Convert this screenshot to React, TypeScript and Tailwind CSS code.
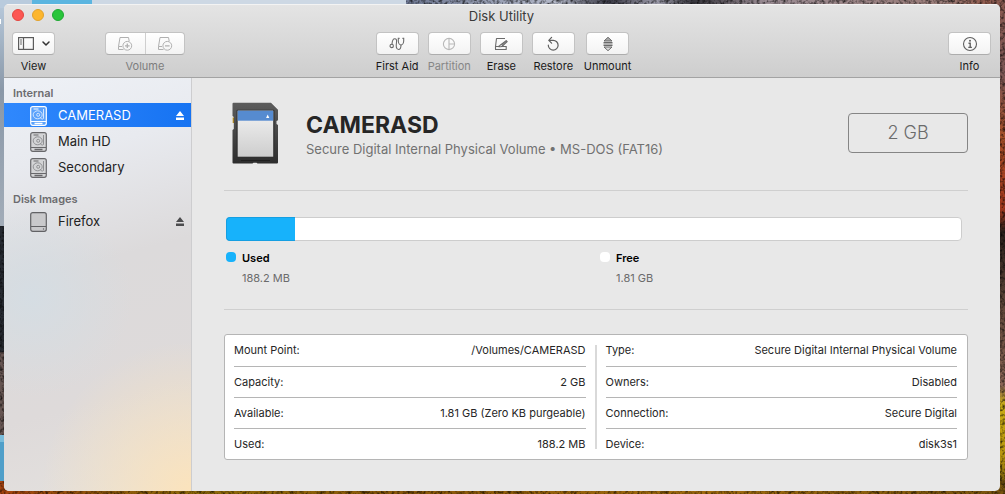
import { useState } from "react";

const FONT = "font-[Inter,'Liberation_Sans',sans-serif]";

const DETAILS_LEFT = [
  ["Mount Point:", "/Volumes/CAMERASD"],
  ["Capacity:", "2 GB"],
  ["Available:", "1.81 GB (Zero KB purgeable)"],
  ["Used:", "188.2 MB"],
];

const DETAILS_RIGHT = [
  ["Type:", "Secure Digital Internal Physical Volume"],
  ["Owners:", "Disabled"],
  ["Connection:", "Secure Digital"],
  ["Device:", "disk3s1"],
];

const USED_PERCENT = 9.4;

function Wallpaper() {
  return (
    <svg className="absolute inset-0 w-full h-full" viewBox="0 0 1005 494" preserveAspectRatio="none" aria-hidden="true">
      <defs>
        <linearGradient id="sky" x1="0" y1="0" x2="0" y2="1">
          <stop offset="0" stopColor="#b9cbdd" />
          <stop offset="0.4" stopColor="#8a98a8" />
          <stop offset="1" stopColor="#a2acb8" />
        </linearGradient>
        <linearGradient id="ridge" x1="0" y1="0" x2="1" y2="0">
          <stop offset="0" stopColor="#6d7792" />
          <stop offset="0.25" stopColor="#b3b8c8" />
          <stop offset="0.34" stopColor="#3a3a46" />
          <stop offset="0.42" stopColor="#9d9cab" />
          <stop offset="0.48" stopColor="#35343b" />
          <stop offset="0.6" stopColor="#9a8c94" />
          <stop offset="0.9" stopColor="#9a7c78" />
          <stop offset="1" stopColor="#8b4b38" />
        </linearGradient>
        <linearGradient id="slope" x1="0" y1="0" x2="0" y2="1">
          <stop offset="0" stopColor="#8a5a50" />
          <stop offset="0.15" stopColor="#7b5654" />
          <stop offset="0.28" stopColor="#a85028" />
          <stop offset="0.42" stopColor="#a2371c" />
          <stop offset="0.47" stopColor="#2b211c" />
          <stop offset="0.62" stopColor="#5e4638" />
          <stop offset="0.78" stopColor="#8a6454" />
          <stop offset="0.82" stopColor="#c9ac14" />
          <stop offset="0.92" stopColor="#b8960e" />
          <stop offset="1" stopColor="#68500c" />
        </linearGradient>
        <linearGradient id="forest" x1="0" y1="0" x2="1" y2="0">
          <stop offset="0" stopColor="#a6430f" />
          <stop offset="0.1" stopColor="#8e550a" />
          <stop offset="0.2" stopColor="#8f6b09" />
          <stop offset="0.4" stopColor="#8a570a" />
          <stop offset="0.7" stopColor="#a06a0d" />
          <stop offset="1" stopColor="#79540e" />
        </linearGradient>
        <filter id="grain" x="0" y="0" width="100%" height="100%">
          <feTurbulence type="fractalNoise" baseFrequency="0.35" numOctaves="2" seed="4" />
          <feColorMatrix values="0 0 0 0 0  0 0 0 0 0  0 0 0 0 0  1.6 0 0 0 -0.65" />
        </filter>
      </defs>
      <rect width="420" height="226" fill="url(#sky)" />
      <rect x="405" width="600" height="20" fill="url(#ridge)" />
      <rect y="226" width="20" height="126" fill="#262a31" />
      <rect y="352" width="20" height="84" fill="#655451" />
      <rect x="990" width="15" height="494" fill="url(#slope)" />
      <rect y="480" width="1005" height="14" fill="url(#forest)" />
      <g filter="url(#grain)">
        <rect width="1005" height="494" fill="none" />
      </g>
      <rect width="8" height="226" fill="url(#sky)" />
      <rect y="435" width="8" height="46" fill="#509fc9" />
      <rect y="435" width="8" height="7" fill="#79bcdb" />
      <rect width="32" height="8" fill="#b9cbdd" />
      <rect x="32" width="60" height="8" fill="#5bb5e0" />
      <rect x="92" width="314" height="8" fill="#cdd8e4" />
      <rect y="19" width="1" height="5" fill="#fff" />
    </svg>
  );
}

function SidebarIcon() {
  return (
    <svg className="w-4 h-[13px]" viewBox="0 0 16 13" fill="none" stroke="#5b5b5b" strokeWidth="1.2">
      <rect x="0.6" y="0.6" width="14.8" height="11.8" />
      <path d="M5.5 1v11" />
      <path d="M2 3h2M2 5h2M2 7h2" strokeWidth="0.9" />
    </svg>
  );
}

function ChevronIcon() {
  return (
    <svg className="w-2 h-[5px]" viewBox="0 0 8 5" fill="none" stroke="#333" strokeWidth="1.5" strokeLinecap="round" strokeLinejoin="round">
      <path d="M1 1l3 3 3-3" />
    </svg>
  );
}

function VolumeIcon({ minus }: { minus?: boolean }) {
  return (
    <svg className="w-4 h-4" viewBox="0 0 16 16" fill="none" stroke="#b0b0b0" strokeWidth="1">
      <path d="M6.5 13.5h-5v-3l1.5-9h8.5l.7 3.6M1.5 10.5H5" />
      <circle cx="10.3" cy="9.8" r="4.4" />
      <path d="M8 9.8h4.6" strokeWidth="1.3" />
      {!minus && <path d="M10.3 7.5v4.6" strokeWidth="1.3" />}
    </svg>
  );
}

function StethoscopeIcon() {
  return (
    <svg className="w-4 h-4" viewBox="0 0 16 16" fill="none" stroke="#6a6a6a" strokeWidth="1.1" strokeLinecap="round">
      <circle cx="2.7" cy="9.9" r="1.7" />
      <path d="M3 8.200C3.200 5 4.200 2.800 5.800 2.800s2.100 1.400 1.700 3.700c-.5 3-.6 7 2 7 2.200 0 2.500-2 2.500-4.500" />
      <path d="M10.300 2.200h-1v2.600c0 2.300 1.300 4.200 2.700 4.200s2.700-1.900 2.700-4.200V2.200h-1" />
    </svg>
  );
}

function PartitionIcon() {
  return (
    <svg className="w-4 h-4" viewBox="0 0 16 16" fill="none" stroke="#b8b8b8" strokeWidth="1.1">
      <circle cx="8" cy="8" r="5.6" />
      <path d="M8 2.4v11.2M8 8h5.6" />
    </svg>
  );
}

function EraseIcon() {
  return (
    <svg className="w-4 h-4" viewBox="0 0 16 16" fill="none" stroke="#6a6a6a" strokeWidth="1.1" strokeLinejoin="round">
      <path d="M12 2.5H3.500L2.500 10.500v3h10.700v-3.500M2.500 10.500h2.700" />
      <path d="M5 10.500c1.700-.1 2-1.700 3.300-2.200l1.500 1.400c-.7 1-2.700 1.300-4.800.8z" />
      <path d="M8.500 8.200l4.700-3.600 1 1-4.300 4" fill="#8a8a8a" />
      <path d="M8 10.500h5" />
    </svg>
  );
}

function RestoreIcon() {
  return (
    <svg className="w-4 h-4" viewBox="0 0 16 16" fill="none" stroke="#5f5f5f" strokeWidth="1.2" strokeLinecap="round" strokeLinejoin="round">
      <path d="M3.300 9.200a4.900 4.900 0 1 0 4.900-4.900H4.300" />
      <path d="M6.600 1.400L3.800 4.300l2.800 2.900" />
    </svg>
  );
}

function UnmountIcon() {
  return (
    <svg className="w-4 h-4" viewBox="0 0 16 16" fill="none" stroke="#6a6a6a" strokeWidth="1" strokeLinejoin="round">
      <path d="M4 5l4-3.700L12 5z" fill="#aaa" />
      <path d="M3.500 6.800h9M3.500 9.200h9" strokeWidth="1.4" />
      <path d="M4 11l4 3.700L12 11z" fill="#ddd" />
    </svg>
  );
}

function InfoIcon() {
  return (
    <svg className="w-4 h-4" viewBox="0 0 16 16" fill="none" stroke="#5f5f5f">
      <circle cx="8" cy="8" r="6.500" strokeWidth="1.1" />
      <circle cx="8" cy="4.800" r="1" fill="#5f5f5f" stroke="none" />
      <path d="M6.500 7.200h1.700v4M6.300 11.400h3.600" strokeWidth="1.4" />
    </svg>
  );
}

function HardDriveIcon({ selected }: { selected: boolean }) {
  const line = selected ? "#ffffff" : "#68686b";
  const detail = selected ? "#d3e6ff" : "#909194";
  const fill = selected ? "#5ba2fb" : "#d3d4d6";
  return (
    <svg className="mt-0.5 w-[17px] h-5" viewBox="0 0 17 20" fill="none" stroke={detail}>
      <rect x="0.7" y="0.7" width="15.6" height="18.6" rx="2" fill={fill} stroke={line} strokeWidth="1.2" />
      <path d="M1 15.500h15" stroke={line} strokeWidth="1.2" />
      <path d="M4.500 17.500h8" stroke={line} strokeWidth="1.6" />
      <path d="M3.500 3h5" stroke={line} />
      <path d="M13.500 3v9.500c-1 1-2.500.5-3.500-1.500" />
      <ellipse cx="7.700" cy="8.800" rx="4.500" ry="4" />
      <circle cx="8.200" cy="8.800" r="1.500" />
    </svg>
  );
}

function DiskImageIcon() {
  return (
    <svg className="mt-0.5 w-[17px] h-5" viewBox="0 0 17 20" fill="none" stroke="#626265">
      <rect x="0.7" y="0.7" width="15.6" height="18.6" rx="2" fill="#c9c9cb" strokeWidth="1.2" />
      <path d="M1 14.500h15" strokeWidth="1.2" />
      <circle cx="13.500" cy="17" r="0.7" fill="#626265" stroke="none" />
    </svg>
  );
}

function EjectIcon() {
  return (
    <svg className="w-2 h-[9px]" viewBox="0 0 8 9" fill="currentColor">
      <path d="M4 0l4 5H0zM0 6.500h8V9H0z" />
    </svg>
  );
}

function SdCardIcon() {
  return (
    <svg className="w-[46px] h-[62px] shrink-0" viewBox="0 0 46 62">
      <defs>
        <linearGradient id="card" x1="0" y1="0" x2="0" y2="1">
          <stop offset="0" stopColor="#5c5c5c" />
          <stop offset="1" stopColor="#2d2d2d" />
        </linearGradient>
        <linearGradient id="sticker" x1="0" y1="0" x2="0" y2="1">
          <stop offset="0" stopColor="#f2f2f2" />
          <stop offset="1" stopColor="#cdcdcd" />
        </linearGradient>
      </defs>
      <rect x="0.7" y="15.500" width="2" height="5.500" fill="#b98d18" />
      <path d="M1.500.8h37.500l7 7v10.500l-1.500.8v3l1.500.8v37.600a1 1 0 0 1-1 1H25.500l-1-.8h-3l-1 .8H1.500a1 1 0 0 1-1-1V28l1.300-1V15L.5 14V1.800a1 1 0 0 1 1-1z" fill="url(#card)" />
      <rect x="4.500" y="7.800" width="38" height="48" rx="1" fill="#303030" />
      <rect x="5.700" y="8.700" width="35.500" height="46" fill="url(#sticker)" />
      <rect x="5.700" y="8.700" width="35.500" height="10" fill="#568bd0" />
      <path d="M35.700 12.500l1.600 3.500h-3.200z" fill="#fff" />
      <path d="M9 58.500h29" stroke="#1f1f1f" strokeWidth="1.2" />
    </svg>
  );
}

const FACE = "h-[23px] flex items-center justify-center rounded border border-[#c3c3c3] border-b-[#adadad] bg-linear-to-b from-white to-[#f3f3f3]";

type ToolButtonProps = {
  label: string;
  children: React.ReactNode;
  disabled?: boolean;
};

function ToolButton({ label, children, disabled }: ToolButtonProps) {
  return (
    <button disabled={disabled} className="flex flex-col items-center gap-[3px]">
      <span className={`w-[43px] gap-2 ${FACE}`}>{children}</span>
      <span className={`text-[11px] leading-4 whitespace-nowrap ${disabled ? "text-[#868686]" : "text-[#1a1a1a]"}`}>{label}</span>
    </button>
  );
}

type VolumeRowProps = {
  name: string;
  selected: string;
  onSelect: (name: string) => void;
  image?: boolean;
  ejectable?: boolean;
};

function VolumeRow({ name, selected, onSelect, image, ejectable }: VolumeRowProps) {
  const active = selected === name;
  return (
    <li className={`h-6 flex items-center pr-[7px] ${active ? "bg-linear-to-r from-[#2f88fd] to-[#1673f2] text-white" : "text-[#222]"}`}>
      <button onClick={() => onSelect(name)} className="flex-1 flex items-center gap-[11px] pl-[26px] text-[13px] leading-5 text-left">
        {image ? <DiskImageIcon /> : <HardDriveIcon selected={active} />}
        {name}
      </button>
      {ejectable && (
        <button aria-label={`Eject ${name}`} className={active ? "text-white" : "text-[#4c4c4e]"}>
          <EjectIcon />
        </button>
      )}
    </li>
  );
}

function Legend({ label, value, color }: { label: string; value: string; color: string }) {
  return (
    <div className="flex gap-1.5">
      <span className={`w-2.5 h-2.5 mt-0.5 rounded-[4px] ${color}`} />
      <div className="flex flex-col gap-1 text-[11px] leading-4">
        <span className="font-semibold text-black">{label}</span>
        <span className="text-[#6b6b6b]">{value}</span>
      </div>
    </div>
  );
}

function DetailsTable({ rows }: { rows: string[][] }) {
  return (
    <table className="flex-1 text-[11px] leading-4 text-[#262626]">
      <tbody>
        {rows.map(([label, value]) => (
          <tr key={label} className="h-[31px] border-b border-[#b5b5b5] last:border-0">
            <th scope="row" className="font-normal text-left">{label}</th>
            <td className="text-right">{value}</td>
          </tr>
        ))}
      </tbody>
    </table>
  );
}

export default function App() {
  const [selected, setSelected] = useState("CAMERASD");

  return (
    <div className={`relative min-h-screen flex pt-1 pl-1 pr-[5px] pb-[3px] bg-[#5a4a47] ${FONT}`}>
      <Wallpaper />

      <div className="relative flex-1 flex flex-col rounded-[5px] overflow-hidden bg-[#e8e8e8]">
        {/* Title bar and toolbar */}
        <header className="pl-2 pr-[9px] pb-[3px] border-t border-t-[#f3f3f3] border-b border-b-[#a3a3a3] bg-linear-to-b from-[#e4e4e4] to-[#cecece]">
          <div className="h-[23px] grid grid-cols-[1fr_auto_1fr] items-center">
            <div className="flex gap-2 pb-1">
              <button aria-label="Close" className="w-3 h-3 rounded-full border border-[#e2463f] bg-[#fc5753]" />
              <button aria-label="Minimize" className="w-3 h-3 rounded-full border border-[#e0a02c] bg-[#fdb62d]" />
              <button aria-label="Zoom" className="w-3 h-3 rounded-full border border-[#1fa733] bg-[#29c53b]" />
            </div>
            <h1 className="pb-0.5 text-[13px] leading-5 text-[#3a3a3a]">Disk Utility</h1>
          </div>

          <div className="mt-1 grid grid-cols-[1fr_auto_1fr]">
            <div className="flex gap-[50px]">
              <ToolButton label="View">
                <SidebarIcon />
                <ChevronIcon />
              </ToolButton>
              <div role="group" aria-labelledby="volume-label" className="flex flex-col items-center gap-[3px]">
                <div className={`w-20 ${FACE}`}>
                  <button disabled aria-label="Add volume" className="flex-1 flex justify-center">
                    <VolumeIcon />
                  </button>
                  <button disabled aria-label="Remove volume" className="flex-1 h-full flex items-center justify-center border-l border-[#cfcfcf]">
                    <VolumeIcon minus />
                  </button>
                </div>
                <span id="volume-label" className="text-[11px] leading-4 text-[#7d7d7d]">Volume</span>
              </div>
            </div>

            <div className="flex gap-[9px] pl-1">
              <ToolButton label="First Aid"><StethoscopeIcon /></ToolButton>
              <ToolButton label="Partition" disabled><PartitionIcon /></ToolButton>
              <ToolButton label="Erase"><EraseIcon /></ToolButton>
              <ToolButton label="Restore"><RestoreIcon /></ToolButton>
              <ToolButton label="Unmount"><UnmountIcon /></ToolButton>
            </div>

            <div className="flex justify-end">
              <ToolButton label="Info"><InfoIcon /></ToolButton>
            </div>
          </div>
        </header>

        <div className="flex-1 flex">
          {/* Sidebar */}
          <nav className="w-[188px] shrink-0 pt-[7px] border-r border-[#cdcdcf] bg-[radial-gradient(circle_at_100%_100%,#fbe3bc_0,#fbe3bc00_150px),radial-gradient(circle_at_15%_53%,#d5dde3_0,#d5dde300_100px),linear-gradient(165deg,#eef1f6_0%,#e8eaef_20%,#dcdadb_45%,#dedada_75%,#e4e1de_100%)]">
            <h2 className="pl-[9px] text-[11px] leading-4 font-semibold text-[#6c6c6f]">Internal</h2>
            <ul className="mt-0.5 flex flex-col gap-0.5">
              <VolumeRow name="CAMERASD" selected={selected} onSelect={setSelected} ejectable />
              <VolumeRow name="Main HD" selected={selected} onSelect={setSelected} />
              <VolumeRow name="Secondary" selected={selected} onSelect={setSelected} />
            </ul>
            <h2 className="mt-3 pl-[9px] text-[11px] leading-4 font-semibold text-[#6c6c6f]">Disk Images</h2>
            <ul className="mt-0.5">
              <VolumeRow name="Firefox" selected={selected} onSelect={setSelected} image ejectable />
            </ul>
          </nav>

          {/* Volume details */}
          <main className="flex-1 min-w-0 px-8 pt-6 pb-6">
            <section className="flex items-center pl-2 pb-[26px] border-b border-[#cfcfcf]">
              <SdCardIcon />
              <div className="flex-1 pl-7 pt-1">
                <h2 className="text-[23px] leading-7 font-bold text-[#262626]">CAMERASD</h2>
                <p className="text-[13px] leading-5 text-[#717171]">Secure Digital Internal Physical Volume • MS-DOS (FAT16)</p>
              </div>
              <div className="w-[120px] h-10 flex items-center justify-center rounded border border-[#858585] text-lg font-light text-[#6b6b6b]">2 GB</div>
            </section>

            <section className="pt-[26px] pb-[23px] pl-0.5 pr-1.5 border-b border-[#cfcfcf]">
              <div className="h-6 flex rounded border border-[#cdcdcd] bg-white">
                <div className="-my-px -ml-px border border-r-0 border-[#159fe2] rounded-l bg-[#17b2fb]" style={{ width: `${USED_PERCENT}%` }} />
              </div>
              <div className="mt-[9px] grid grid-cols-2 gap-3">
                <Legend label="Used" value="188.2 MB" color="bg-[#17b2fb]" />
                <Legend label="Free" value="1.81 GB" color="bg-white" />
              </div>
            </section>

            <section className="mt-6 flex gap-[9px] pl-[9px] pr-2.5 rounded-[3px] border border-[#b5b5b5] bg-white">
              <DetailsTable rows={DETAILS_LEFT} />
              <div className="w-0.5 my-2.5 bg-[#d9d9d9]" />
              <DetailsTable rows={DETAILS_RIGHT} />
            </section>
          </main>
        </div>
      </div>
    </div>
  );
}
